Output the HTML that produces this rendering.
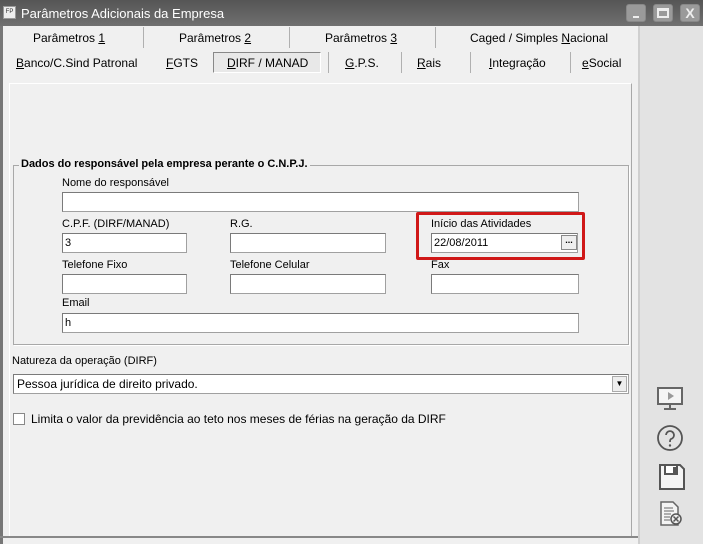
<!DOCTYPE html>
<html><head><meta charset="utf-8"><style>
*{box-sizing:border-box;margin:0;padding:0}
body{width:703px;height:544px;position:relative;overflow:hidden;background:#f0f0f0;font-family:"Liberation Sans",sans-serif;font-size:11px;color:#000}
.a{position:absolute;white-space:nowrap}
.tb{left:0;top:0;width:703px;height:26px;background:linear-gradient(#555,#707070)}
.btn{top:4px;width:20px;height:18px;background:#9a9a9a;border:1px solid #888;border-radius:3px}
.inp{background:#fff;border:1px solid #a0a0a0;border-top-color:#7a7a7a;border-left-color:#7a7a7a;height:20px}
.sep{width:1px;background:#b0b0b0}
u{text-decoration:underline}
</style></head><body>
<div class="a tb"></div>
<div class="a" style="left:3px;top:6px;width:13px;height:13px;background:#eee;border:1px solid #999;font-size:6px;line-height:11px;text-align:center;color:#333">FP</div>
<div class="a" style="left:21px;top:6px;font-size:13px;color:#fff">Parâmetros Adicionais da Empresa</div>
<div class="a btn" style="left:626px"><div class="a" style="left:6px;top:11px;width:6px;height:2px;background:#eee"></div></div>
<div class="a btn" style="left:653px"><div class="a" style="left:3px;top:3px;width:12px;height:10px;border:2px solid #eee;border-top-width:3px"></div></div>
<div class="a btn" style="left:680px;color:#eee;font-weight:bold;font-size:14px;text-align:center;line-height:16px">X</div>
<div class="a" style="left:0;top:26px;width:3px;height:518px;background:#777"></div>
<div class="a" style="left:638px;top:26px;width:2px;height:518px;background:#cfcfcf"></div>
<div class="a" style="left:640px;top:26px;width:63px;height:518px;background:#e3e3e3"></div>
<!-- tabs -->
<div class="a" style="left:33px;top:31px;font-size:12px">Parâmetros <u>1</u></div>
<div class="a sep" style="left:143px;top:27px;height:21px"></div>
<div class="a" style="left:179px;top:31px;font-size:12px">Parâmetros <u>2</u></div>
<div class="a sep" style="left:289px;top:27px;height:21px"></div>
<div class="a" style="left:325px;top:31px;font-size:12px">Parâmetros <u>3</u></div>
<div class="a sep" style="left:435px;top:27px;height:21px"></div>
<div class="a" style="left:470px;top:31px;font-size:12px">Caged / Simples <u>N</u>acional</div>
<div class="a" style="left:16px;top:56px;font-size:12px"><u>B</u>anco/C.Sind Patronal</div>
<div class="a" style="left:166px;top:56px;font-size:12px"><u>F</u>GTS</div>
<div class="a" style="left:213px;top:52px;width:108px;height:21px;border:1px solid #888;border-right-color:#fff;border-bottom-color:#fff;background:#e8e8e8"></div>
<div class="a" style="left:227px;top:56px;font-size:12px"><u>D</u>IRF / MANAD</div>
<div class="a sep" style="left:328px;top:52px;height:21px"></div>
<div class="a" style="left:345px;top:56px;font-size:12px"><u>G</u>.P.S.</div>
<div class="a sep" style="left:401px;top:52px;height:21px"></div>
<div class="a" style="left:417px;top:56px;font-size:12px"><u>R</u>ais</div>
<div class="a sep" style="left:470px;top:52px;height:21px"></div>
<div class="a" style="left:489px;top:56px;font-size:12px"><u>I</u>ntegração</div>
<div class="a sep" style="left:570px;top:52px;height:21px"></div>
<div class="a" style="left:582px;top:56px;font-size:12px"><u>e</u>Social</div>
<!-- inner panel -->
<div class="a" style="left:9px;top:83px;width:623px;height:454px;border:1px solid #fff;border-right-color:#a8a8a8;border-bottom:none"></div>
<div class="a" style="left:13px;top:165px;width:616px;height:180px;border:1px solid #a8a8a8;box-shadow:1px 1px 0 #fff"></div>
<div class="a" style="left:19px;top:158px;background:#f0f0f0;padding:0 2px;font-weight:bold;font-size:11px">Dados do responsável pela empresa perante o C.N.P.J.</div>
<div class="a" style="left:62px;top:177px">Nome do responsável</div>
<div class="a inp" style="left:62px;top:192px;width:517px"></div>
<div class="a" style="left:62px;top:218px">C.P.F. (DIRF/MANAD)</div>
<div class="a inp" style="left:62px;top:233px;width:125px;padding:3px 2px">3</div>
<div class="a" style="left:230px;top:218px">R.G.</div>
<div class="a inp" style="left:230px;top:233px;width:156px"></div>
<div class="a" style="left:416px;top:212px;width:169px;height:48px;border:3px solid #d01818;border-radius:2px"></div>
<div class="a" style="left:431px;top:218px">Início das Atividades</div>
<div class="a inp" style="left:431px;top:233px;width:147px;padding:3px 2px">22/08/2011</div>
<div class="a" style="left:561px;top:235px;width:16px;height:15px;background:#eee;border:1px solid #888;font-size:9px;font-weight:bold;text-align:center;line-height:9px">...</div>
<div class="a" style="left:62px;top:259px">Telefone Fixo</div>
<div class="a inp" style="left:62px;top:274px;width:125px"></div>
<div class="a" style="left:230px;top:259px">Telefone Celular</div>
<div class="a inp" style="left:230px;top:274px;width:156px"></div>
<div class="a" style="left:431px;top:259px">Fax</div>
<div class="a inp" style="left:431px;top:274px;width:148px"></div>
<div class="a" style="left:62px;top:297px">Email</div>
<div class="a inp" style="left:62px;top:313px;width:517px;padding:3px 2px">h</div>
<div class="a" style="left:12px;top:355px">Natureza da operação (DIRF)</div>
<div class="a inp" style="left:13px;top:374px;width:616px;padding:2px 3px;font-size:12px">Pessoa jurídica de direito privado.</div>
<div class="a" style="left:612px;top:376px;width:15px;height:16px;background:#eee;border:1px solid #aaa;font-size:8px;text-align:center;line-height:14px">▼</div>
<div class="a" style="left:13px;top:413px;width:12px;height:12px;background:#fff;border:1px solid #888"></div>
<div class="a" style="left:31px;top:412px;font-size:12px">Limita o valor da previdência ao teto nos meses de férias na geração da DIRF</div>
<div class="a" style="left:0;top:536px;width:638px;height:2px;background:#888"></div>
<div class="a" style="left:3px;top:538px;width:635px;height:6px;background:#f0f0f0"></div>
<!-- icons -->
<svg class="a" style="left:656px;top:386px" width="30" height="26" viewBox="0 0 30 26"><rect x="2" y="2" width="24" height="16" fill="#f4f4f4" stroke="#666" stroke-width="2"/><path d="M12 6l6 4-6 4z" fill="#999"/><path d="M14 18v4M8 23h12" stroke="#666" stroke-width="2"/></svg>
<svg class="a" style="left:656px;top:424px" width="30" height="30" viewBox="0 0 30 30"><circle cx="14" cy="14" r="12" fill="none" stroke="#555" stroke-width="1.8"/><path d="M10 11a4 4 0 1 1 5 4c-1 .5-1 1.5-1 3" fill="none" stroke="#555" stroke-width="1.8"/><circle cx="14" cy="21.5" r="1.2" fill="#555"/></svg>
<svg class="a" style="left:658px;top:463px" width="28" height="28" viewBox="0 0 28 28"><path d="M2 2h20l4 4v20H2z" fill="#f4f4f4" stroke="#555" stroke-width="2"/><rect x="7" y="2" width="12" height="9" fill="#fff" stroke="#555" stroke-width="2"/><rect x="15" y="4" width="3" height="6" fill="#555"/></svg>
<svg class="a" style="left:659px;top:500px" width="26" height="28" viewBox="0 0 26 28"><path d="M2 2h12l5 5v18H2z" fill="#f4f4f4" stroke="#666" stroke-width="1.5"/><path d="M5 8h9M5 11h10M5 14h7M5 17h6M5 20h6" stroke="#666"/><circle cx="17" cy="19" r="5" fill="#eee" stroke="#555" stroke-width="1.5"/><path d="M14.5 16.5l5 5M19.5 16.5l-5 5" stroke="#555" stroke-width="1.5"/></svg>
</body></html>
